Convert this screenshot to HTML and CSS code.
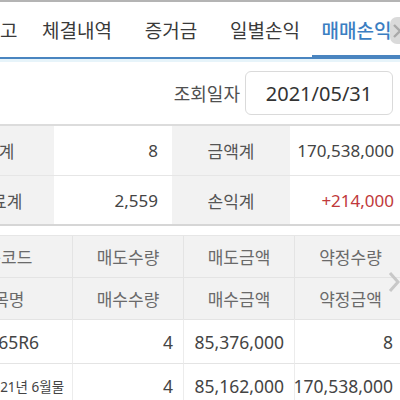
FILE: index.html
```html
<!DOCTYPE html>
<html lang="ko">
<head>
<meta charset="utf-8">
<title>매매손익</title>
<link rel="stylesheet" href="styles.css">
</head>
<body>
<div class="page">
  <nav class="tabs">
    <div class="tab">잔고</div>
    <div class="tab">체결내역</div>
    <div class="tab">증거금</div>
    <div class="tab">일별손익</div>
    <div class="tab active">매매손익</div>
    <div class="tab-more"><svg width="10" height="16" viewBox="0 0 10 16"><path d="M2 2 L8 8 L2 14" fill="none" stroke="#a9a9a9" stroke-width="2.4"/></svg></div>
  </nav>
  <div class="strip"></div>
  <div class="date-row">
    <span class="date-label">조회일자</span>
    <div class="date-box">2021/05/31</div>
  </div>
  <div class="summary">
    <div class="s-label">수량계</div>
    <div class="s-val">8</div>
    <div class="s-label">금액계</div>
    <div class="s-val">170,538,000</div>
    <div class="s-label row2">수수료계</div>
    <div class="s-val row2">2,559</div>
    <div class="s-label row2">손익계</div>
    <div class="s-val row2 plus">+214,000</div>
  </div>
  <div class="grid-wrap">
    <div class="grid">
      <div class="h">종목코드</div>
      <div class="h">매도수량</div>
      <div class="h">매도금액</div>
      <div class="h">약정수량</div>
      <div class="h r2">종목명</div>
      <div class="h r2">매수수량</div>
      <div class="h r2">매수금액</div>
      <div class="h r2">약정금액</div>
      <div class="d c">A0165R6</div>
      <div class="d">4</div>
      <div class="d">85,376,000</div>
      <div class="d last">8</div>
      <div class="d c small r4">코스피 2021년 6월물</div>
      <div class="d r4">4</div>
      <div class="d r4">85,162,000</div>
      <div class="d last r4">170,538,000</div>
    </div>
    <svg class="grid-more" width="12" height="22" viewBox="0 0 12 22"><path d="M2 2 L10 11 L2 20" fill="none" stroke="#c8c8c8" stroke-width="3"/></svg>
  </div>
</div>
</body>
</html>
```
FILE: styles.css
```css
html, body {
  margin: 0;
  padding: 0;
  width: 400px;
  height: 400px;
  overflow: hidden;
  background: #fff;
}
.page {
  width: 400px;
  overflow: hidden;
  font-family: "Noto Sans", "Noto Sans CJK KR", sans-serif;
  border-top: 2px solid #b4b4b4;
  position: relative;
}
.tabs {
  position: relative;
  display: grid;
  grid-template-columns: 60px 94px 94px 94px 89px;
  margin-left: -30px;
  width: 430px;
  height: 55px;
  border-bottom: 2px solid #4a85c0;
}
.tab {
  display: flex;
  align-items: center;
  justify-content: center;
  font-size: 19px;
  color: #3a3a3a;
  white-space: nowrap;
}
.tab.active {
  color: #3b7ec2;
  font-weight: 500;
  box-shadow: inset 0 -2px 0 #4a85c0;
}
.tab-more {
  position: absolute;
  right: -6px;
  top: 15px;
  width: 14px;
  height: 27px;
  border-radius: 7px 0 0 7px;
  background: rgba(205, 205, 205, 0.75);
  display: flex;
  align-items: center;
  padding-left: 2px;
}
.strip {
  height: 3px;
  background: #e7f4fa;
}
.date-row {
  height: 62px;
  display: flex;
  align-items: center;
  justify-content: flex-end;
  padding-right: 7px;
  gap: 5px;
  border-bottom: 2px solid #dcdcdc;
}
.date-label {
  font-size: 18px;
  color: #505050;
}
.date-box {
  width: 146px;
  height: 42px;
  border: 1px solid #dadada;
  border-radius: 6px;
  display: flex;
  align-items: center;
  justify-content: center;
  font-size: 20px;
  color: #333;
}
.summary {
  display: grid;
  grid-template-columns: 126px 118px 118px 118px;
  grid-template-rows: 49px 49px;
  margin-left: -72px;
  width: 480px;
  border-bottom: 2px solid #d6d6d6;
}
.s-label {
  background: #f2f2f2;
  display: flex;
  align-items: center;
  justify-content: center;
  font-size: 17px;
  color: #555;
  white-space: nowrap;
}
.s-val {
  display: flex;
  align-items: center;
  justify-content: flex-end;
  padding-right: 14px;
  font-size: 17px;
  color: #444;
}
.row2 {
  border-top: 1px solid #e6e6e6;
}
.s-val.plus {
  color: #c0393b;
}
.grid-wrap {
  position: relative;
  margin-top: 9px;
}
.grid {
  display: grid;
  grid-template-columns: 142px 111px 111px 112px;
  grid-template-rows: 41px 42px 44px 44px;
  margin-left: -70px;
  width: 476px;
  border-top: 1px solid #e6e6e6;
}
.h {
  background: #f2f2f2;
  display: flex;
  align-items: center;
  justify-content: center;
  font-size: 17px;
  color: #6a6a6a;
  border-left: 1px solid #e4e4e4;
  white-space: nowrap;
}
.h.r2 {
  border-top: 1px solid #e4e4e4;
}
.h:nth-child(4n+1), .d:nth-child(4n+1) {
  border-left: none;
}
.d {
  display: flex;
  align-items: center;
  justify-content: flex-end;
  padding-right: 10px;
  font-size: 17.5px;
  color: #444;
  border-left: 1px solid #ececec;
  border-top: 1px solid #e4e4e4;
  white-space: nowrap;
}
.d.c {
  justify-content: center;
  padding-right: 0;
  padding-left: 4px;
}
.d.last {
  padding-right: 13px;
}
.d.small {
  font-size: 13.5px;
  padding-left: 6px;
}
.grid-more {
  position: absolute;
  right: 0;
  top: 36px;
}
```
